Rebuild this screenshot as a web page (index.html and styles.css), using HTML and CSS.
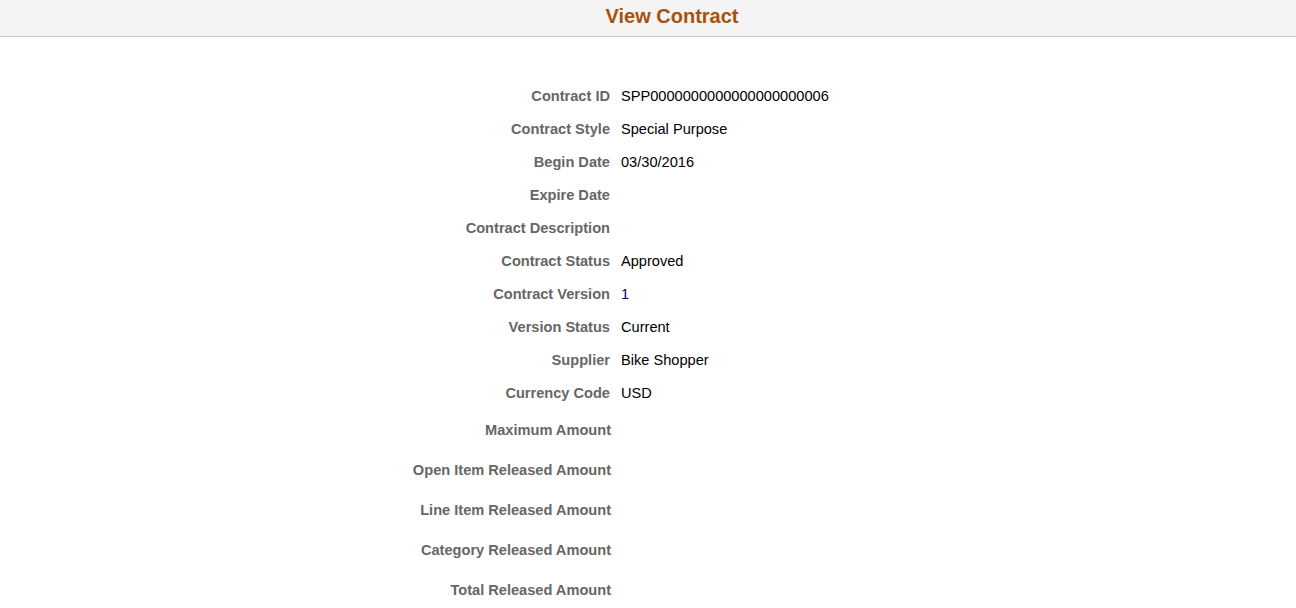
FILE: index.html
```html
<!DOCTYPE html>
<html lang="en">
<head>
    <meta charset="UTF-8">
    <meta name="viewport" content="width=device-width, initial-scale=1.0">
    <title>View Contract</title>
    <link rel="stylesheet" href="styles.css">
</head>
<body>
    <div class="header">
        <h1>View Contract</h1>
    </div>
    <div class="details">
        <div class="row"><span class="label">Contract ID</span><span class="value">SPP0000000000000000000006</span></div>
        <div class="row"><span class="label">Contract Style</span><span class="value">Special Purpose</span></div>
        <div class="row"><span class="label">Begin Date</span><span class="value">03/30/2016</span></div>
        <div class="row"><span class="label">Expire Date</span><span class="value"></span></div>
        <div class="row"><span class="label">Contract Description</span><span class="value"></span></div>
        <div class="row"><span class="label">Contract Status</span><span class="value">Approved</span></div>
        <div class="row"><span class="label">Contract Version</span><span class="value num">1</span></div>
        <div class="row"><span class="label">Version Status</span><span class="value">Current</span></div>
        <div class="row"><span class="label">Supplier</span><span class="value">Bike Shopper</span></div>
        <div class="row"><span class="label">Currency Code</span><span class="value">USD</span></div>
        <!-- amount rows are a bit taller -->
        <div class="amounts">
            <div class="row amount"><span class="label">Maximum Amount</span><span class="value"></span></div>
            <div class="row amount"><span class="label">Open Item Released Amount</span><span class="value"></span></div>
            <div class="row amount"><span class="label">Line Item Released Amount</span><span class="value"></span></div>
            <div class="row amount"><span class="label">Category Released Amount</span><span class="value"></span></div>
            <div class="row amount"><span class="label">Total Released Amount</span><span class="value"></span></div>
        </div>
    </div>
</body>
</html>
```

FILE: styles.css
```css
body {
    font-family: Arial, "Liberation Sans", sans-serif;
    font-size: 14.6px;
    background-color: #fff;
    margin: 0;
}

.header {
    background-color: #f4f4f4;
    border-bottom: 1px solid #cbcbcb;
    height: 37px;
    box-sizing: border-box;
    padding: 0 0 4px 48px;
    display: flex;
    justify-content: center;
    align-items: center;
}

.header h1 {
    margin: 0;
    font-size: 20px;
    font-weight: bold;
    color: #a5520f;
}

.details {
    padding-top: 42px;
}

.row {
    display: grid;
    grid-template-columns: 610px auto;
    column-gap: 11px;
    height: 33px;
    align-items: center;
}

.amounts {
    padding-top: 1px;
}

.row.amount {
    height: 40px;
    grid-template-columns: 611px auto;
}

.label {
    text-align: right;
    font-weight: bold;
    color: #666;
}

.value {
    color: #000;
}

.value.num {
    color: #000066;
}
```
